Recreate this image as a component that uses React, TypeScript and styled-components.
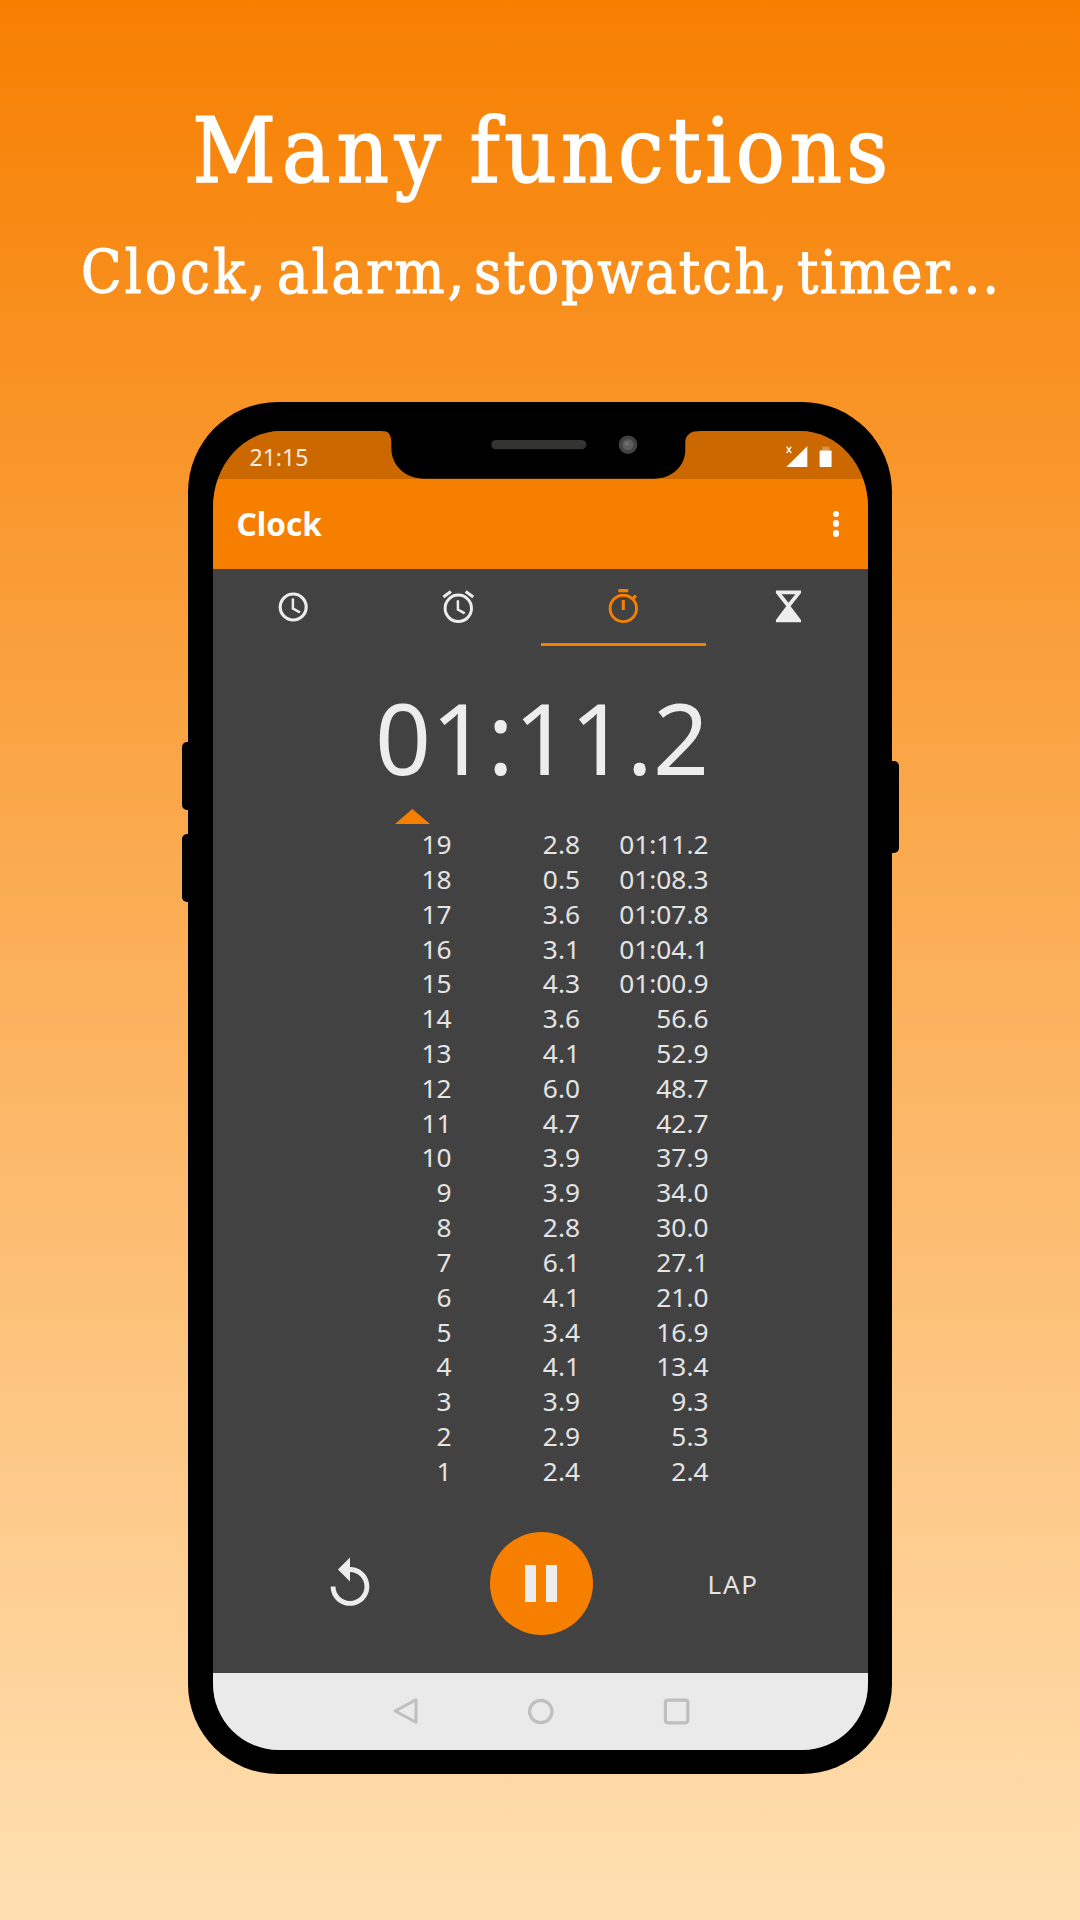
import React from "react";
import styled, { createGlobalStyle } from "styled-components";
import { MdReplay } from "react-icons/md";

const ORANGE = "#f77f00";
const LIGHT = "#ededed";

const GlobalStyle = createGlobalStyle`
  *, *::before, *::after { box-sizing: border-box; }
  body { margin: 0; }
`;

const Page = styled.main`
  width: 1080px;
  height: 1920px;
  overflow: hidden;
  display: flex;
  flex-direction: column;
  align-items: center;
  background: linear-gradient(180deg, #f77f00 0%, #ffe0b2 100%);
  font-family: "Noto Sans", "Open Sans", sans-serif;
`;

const Headline = styled.header`
  width: 100%;
  height: 402px;
  padding-top: 91px;
  display: flex;
  flex-direction: column;
  color: #fff;
  font-family: "DejaVu Serif Condensed", "DejaVu Serif", serif;
  font-stretch: condensed;
`;

const Title = styled.h1`
  margin: 0;
  height: 120px;
  padding-left: 192.5px;
  display: flex;
  font-size: 90.5px;
  font-weight: 400;
  line-height: 120px;
  white-space: nowrap;
  -webkit-text-stroke: 1.6px #fff;
`;

const Subtitle = styled.p`
  margin: 22px 0 0;
  height: 80px;
  padding-left: 81px;
  display: flex;
  font-size: 59px;
  line-height: 80px;
  white-space: nowrap;
  -webkit-text-stroke: 1.1px #fff;
`;

const Word = styled.span<{ $width: number; $tracking: number }>`
  flex: none;
  width: ${(p) => p.$width}px;
  letter-spacing: ${(p) => p.$tracking}px;
`;

const Phone = styled.section`
  position: relative;
  width: 703.6px;
  height: 1371.5px;
  padding: 29px 24px 24px 24.3px;
  border-radius: 90px;
  background: #000;
`;

const SideButton = styled.span<{ $side: "left" | "right"; $top: number; $height: number }>`
  position: absolute;
  ${(p) => p.$side}: ${(p) => (p.$side === "left" ? -6 : -7.3)}px;
  top: ${(p) => p.$top}px;
  width: 20px;
  height: ${(p) => p.$height}px;
  border-radius: 5px;
  background: #000;
`;

const Screen = styled.div`
  height: 100%;
  overflow: hidden;
  display: flex;
  flex-direction: column;
  border-radius: 68px 68px 66px 66px / 76px 76px 66px 66px;
  background: #424242;
`;

const StatusBar = styled.div`
  flex: none;
  height: 47.7px;
  display: flex;
  align-items: flex-start;
  justify-content: space-between;
  padding: 0 36px 0 37px;
  background: #cc6800;
`;

const StatusTime = styled.span`
  margin-top: 8.5px;
  width: 80px;
  color: #faecdc;
  font-size: 23px;
  line-height: 34px;
  letter-spacing: 0px;
`;

const StatusIcons = styled.svg`
  margin-top: 14px;
  width: 47px;
  height: 24px;
`;

const Notch = styled.svg`
  position: absolute;
  left: 193.6px;
  top: 28px;
  width: 317px;
  height: 49px;
`;

const AppBar = styled.div`
  flex: none;
  height: 90px;
  display: flex;
  align-items: center;
  justify-content: space-between;
  padding: 0 28.5px 0 24px;
  background: ${ORANGE};
`;

const AppTitle = styled.h2`
  margin: 0;
  color: #fff;
  font-size: 31.6px;
  font-weight: 700;
  line-height: 44px;
`;

const Overflow = styled.div`
  display: flex;
  flex-direction: column;
  gap: 3.2px;
`;

const Dot = styled.i`
  width: 6.6px;
  height: 6.6px;
  border-radius: 50%;
  background: #fff;
`;

const Tabs = styled.nav`
  flex: none;
  height: 77px;
  margin: 0 -1.8px;
  display: grid;
  grid-template-columns: repeat(4, 165px);
`;

const Tab = styled.div<{ $active?: boolean }>`
  display: flex;
  justify-content: center;
  padding-top: 18.5px;
  color: ${(p) => (p.$active ? ORANGE : LIGHT)};
  border-bottom: 3.5px solid ${(p) => (p.$active ? ORANGE : "transparent")};
`;

const TabIcon = styled.svg`
  width: 40px;
  height: 40px;
  fill: none;
  stroke: currentColor;
`;

const Elapsed = styled.div`
  flex: none;
  height: 130px;
  margin-top: 26px;
  padding-left: 162.5px;
  color: ${LIGHT};
  font-size: 98px;
  line-height: 130px;
  letter-spacing: 0.2px;
  white-space: nowrap;
`;

const Marker = styled.svg`
  flex: none;
  width: 35px;
  height: 15px;
  margin: 7.8px 0 0 182.5px;
`;

const Laps = styled.div`
  flex: none;
  margin-top: 2.7px;
  padding-left: 110.5px;
`;

const LapRow = styled.div`
  height: 34.82px;
  display: grid;
  grid-template-columns: 128.5px 128.5px 128.5px;
  color: #e4e4e4;
  font-size: 26.3px;
  line-height: 34.82px;
  text-align: right;
`;

const Controls = styled.div`
  flex: none;
  height: 104px;
  margin-top: 43px;
  display: grid;
  grid-template-columns: 277px 103px 276px;
  align-items: center;
`;

const Replay = styled.div`
  display: flex;
  padding-left: 108.5px;
  color: ${LIGHT};
`;

const PauseButton = styled.div`
  width: 103px;
  height: 103px;
  display: flex;
  align-items: center;
  justify-content: center;
  gap: 10px;
  border-radius: 50%;
  background: ${ORANGE};
`;

const PauseBar = styled.i`
  width: 11px;
  height: 37px;
  background: ${LIGHT};
`;

const LapButton = styled.span`
  padding-left: 115px;
  color: #e4e4e4;
  font-size: 26px;
  line-height: 36px;
  letter-spacing: 1.8px;
`;

const NavBar = styled.div`
  flex: none;
  height: 77px;
  margin-top: auto;
  display: flex;
  justify-content: center;
  align-items: center;
  gap: 108px;
  background: #eaeaea;
`;

const NavIcon = styled.svg`
  width: 28px;
  height: 28px;
  fill: none;
  stroke: #bfbfbf;
  stroke-width: 3.2;
`;

const laps: [number, string, string][] = [
  [19, "2.8", "01:11.2"],
  [18, "0.5", "01:08.3"],
  [17, "3.6", "01:07.8"],
  [16, "3.1", "01:04.1"],
  [15, "4.3", "01:00.9"],
  [14, "3.6", "56.6"],
  [13, "4.1", "52.9"],
  [12, "6.0", "48.7"],
  [11, "4.7", "42.7"],
  [10, "3.9", "37.9"],
  [9, "3.9", "34.0"],
  [8, "2.8", "30.0"],
  [7, "6.1", "27.1"],
  [6, "4.1", "21.0"],
  [5, "3.4", "16.9"],
  [4, "4.1", "13.4"],
  [3, "3.9", "9.3"],
  [2, "2.9", "5.3"],
  [1, "2.4", "2.4"],
];

export default function App() {
  return (
    <>
      <GlobalStyle />
      <Page>
        <Headline>
          <Title>
            <Word $width={277} $tracking={6}>Many</Word>
            <Word $width={450} $tracking={4.5}>functions</Word>
          </Title>
          <Subtitle>
            <Word $width={196} $tracking={3.2}>Clock,</Word>
            <Word $width={197} $tracking={2.9}>alarm,</Word>
            <Word $width={323} $tracking={2.2}>stopwatch,</Word>
            <Word $width={210} $tracking={1.8}>timer...</Word>
          </Subtitle>
        </Headline>

        <Phone>
          <SideButton $side="left" $top={340} $height={68} />
          <SideButton $side="left" $top={432} $height={68} />
          <SideButton $side="right" $top={358.5} $height={92} />
          <Screen>
            <StatusBar>
              <StatusTime>21:15</StatusTime>
              <StatusIcons viewBox="0 0 47 24">
                <path d="M22.3 1.2V22H1.3Z" fill="#fff" />
                <path d="M1.6 1.6l4.6 6.4M6.2 1.6L1.6 8" stroke="#fff" strokeWidth="1.3" />
                <rect x="37" y="1.7" width="7.5" height="4" fill="#fff" opacity="0.3" />
                <rect x="34.6" y="5.4" width="12" height="16.6" rx="0.8" fill="#fff" />
              </StatusIcons>
            </StatusBar>
            <AppBar>
              <AppTitle>Clock</AppTitle>
              <Overflow>
                <Dot />
                <Dot />
                <Dot />
              </Overflow>
            </AppBar>
            <Tabs>
              <Tab>
                <TabIcon viewBox="0 0 40 40">
                  <circle cx="20.2" cy="20" r="13" strokeWidth="3.1" />
                  <path d="M19.9 11.5V21.5L27 25.3" strokeWidth="2.5" />
                </TabIcon>
              </Tab>
              <Tab>
                <TabIcon viewBox="0 0 40 40">
                  <circle cx="20.3" cy="21.3" r="13.2" strokeWidth="3" />
                  <path d="M19.9 13.2V22.6L26.7 26.4" strokeWidth="2.5" />
                  <path d="M5.4 10L12.9 4.5M27.7 4.5L35.2 10" strokeWidth="3" />
                </TabIcon>
              </Tab>
              <Tab $active>
                <TabIcon viewBox="0 0 40 40">
                  <circle cx="20.3" cy="21.4" r="13.2" strokeWidth="2.9" />
                  <path d="M15.3 3.6H25.2M20.3 13V23" strokeWidth="3.1" />
                  <path d="M29.5 12L33 8.7" strokeWidth="3.2" />
                </TabIcon>
              </Tab>
              <Tab>
                <TabIcon viewBox="0 0 40 40">
                  <path
                    fill="currentColor"
                    stroke="none"
                    fillRule="evenodd"
                    d="M7.9 3.6H33V6L22.6 19.3L33 32.9V35.3H7.9V32.9L18.2 19.3L7.9 6ZM13.6 7.2L20.5 15.8L27.4 7.2Z"
                  />
                </TabIcon>
              </Tab>
            </Tabs>
            <Elapsed>01:11.2</Elapsed>
            <Marker viewBox="0 0 35 15">
              <path d="M17.3 0L35 15H0Z" fill={ORANGE} />
            </Marker>
            <Laps>
              {laps.map(([n, split, total]) => (
                <LapRow key={n}>
                  <span>{n}</span>
                  <span>{split}</span>
                  <span>{total}</span>
                </LapRow>
              ))}
            </Laps>
            <Controls>
              <Replay>
                <MdReplay size={58} />
              </Replay>
              <PauseButton>
                <PauseBar />
                <PauseBar />
              </PauseButton>
              <LapButton>LAP</LapButton>
            </Controls>
            <NavBar>
              <NavIcon viewBox="0 0 28 28">
                <path d="M26 2.8V25.2L5.2 14Z" strokeLinejoin="round" strokeWidth="3" />
              </NavIcon>
              <NavIcon viewBox="0 0 28 28">
                <circle cx="14.8" cy="14.5" r="11.2" />
              </NavIcon>
              <NavIcon viewBox="0 0 28 28">
                <rect x="3.4" y="3.2" width="22.4" height="22.6" rx="2.5" />
              </NavIcon>
            </NavBar>
          </Screen>
          <Notch viewBox="0 0 317 49">
            <path
              d="M0 0V1.2H2C7 1.2 9.3 6 9.3 12V18C9.3 35 23 48.7 42 48.7H272C290 48.7 303.3 36 303.3 20V12C303.3 6 308 1.2 315 1.2H317V0Z"
              fill="#000"
            />
            <rect x="109.3" y="10" width="95" height="9.3" rx="4.6" fill="#333331" />
            <circle cx="246" cy="14.7" r="9.3" fill="#414141" />
            <circle cx="246" cy="14.7" r="5.6" fill="#5c5c5c" />
            <circle cx="244.8" cy="13.6" r="2.4" fill="#6d6d6d" />
          </Notch>
        </Phone>
      </Page>
    </>
  );
}
